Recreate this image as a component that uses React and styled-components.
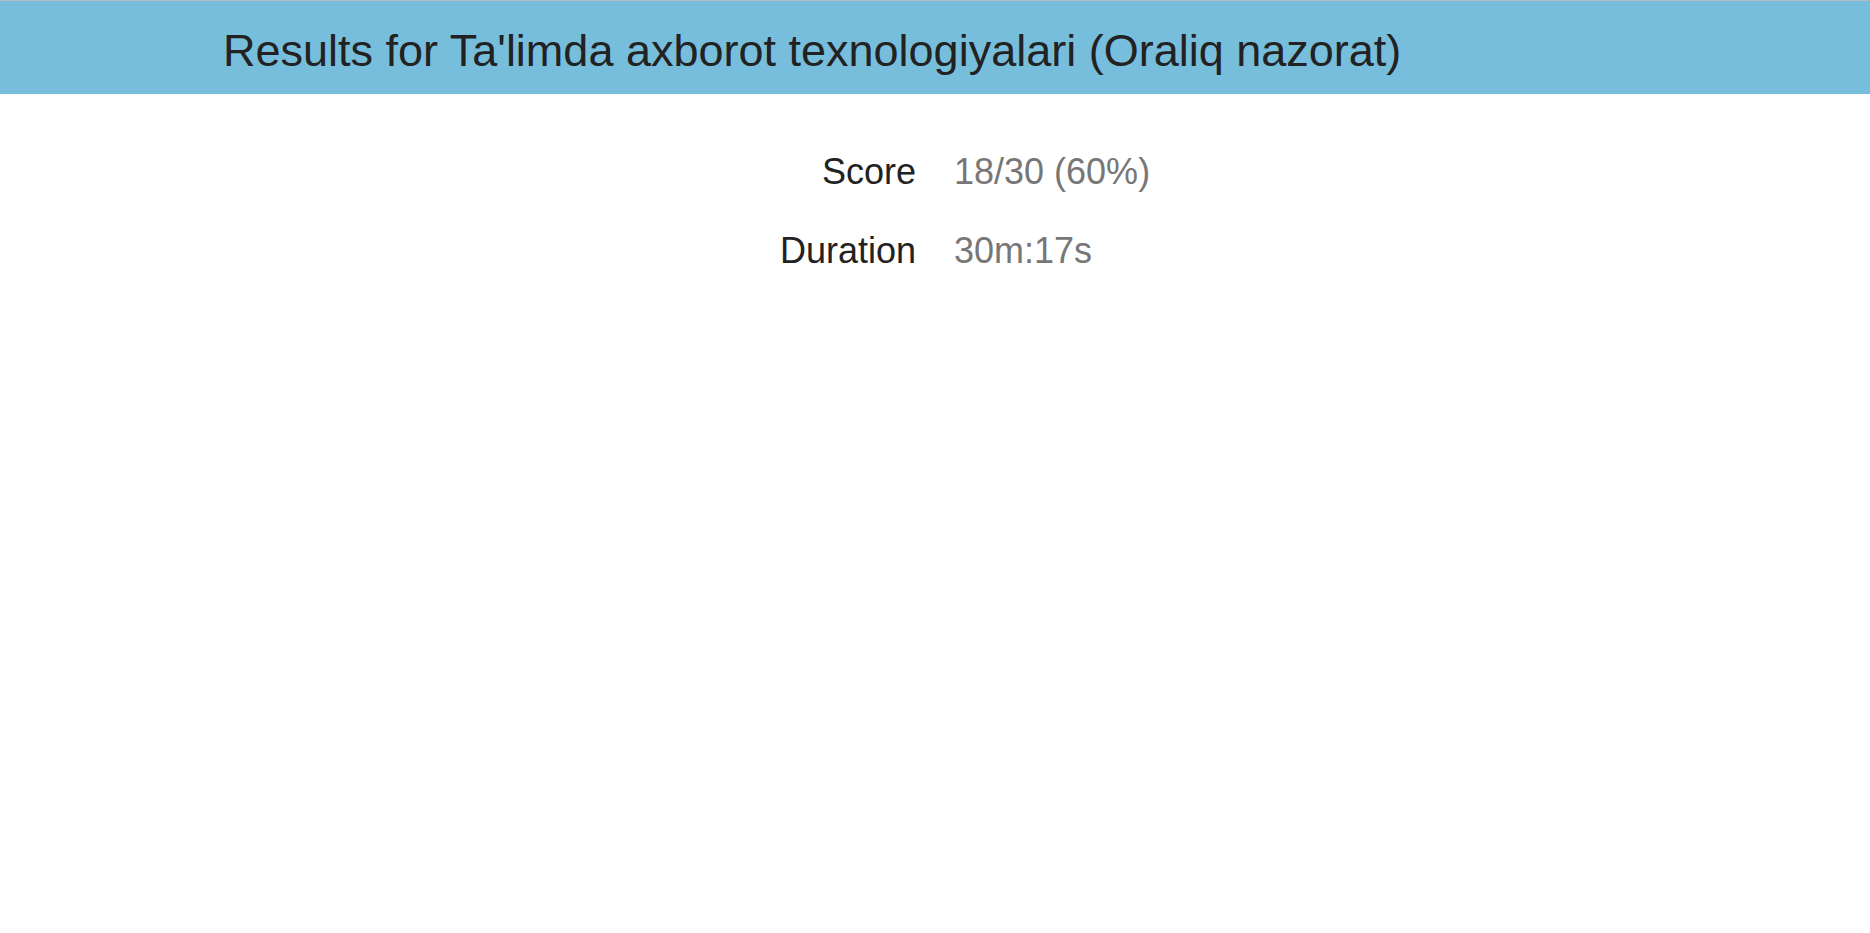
import React from 'react';
import styled, { createGlobalStyle } from 'styled-components';

const GlobalStyle = createGlobalStyle`
  html, body {
    margin: 0;
    padding: 0;
    background: #ffffff;
    font-family: "Liberation Sans", Arial, sans-serif;
  }
`;

const Header = styled.header`
  box-sizing: border-box;
  height: 94px;
  padding: 25px 0 0 223px;
  background-color: #77bedd;
  border-top: 1px solid #b3bcc4;
`;

const Title = styled.h1`
  margin: 0;
  font-size: 45px;
  font-weight: 400;
  line-height: 49.5px;
  color: #222222;
`;

const Details = styled.dl`
  display: grid;
  grid-template-columns: 1fr 1fr;
  column-gap: 38px;
  row-gap: 28px;
  margin: 52px 0 0;
  font-size: 36px;
  line-height: 51px;
`;

const Label = styled.dt`
  margin: 0;
  text-align: right;
  color: #222222;
`;

const Value = styled.dd`
  margin: 0;
  text-align: left;
  color: #777777;
`;

const rows = [
  { label: 'Score', value: '18/30 (60%)' },
  { label: 'Duration', value: '30m:17s' },
];

const App = () => (
  <>
    <GlobalStyle />
    <Header>
      <Title>Results for Ta'limda axborot texnologiyalari (Oraliq nazorat)</Title>
    </Header>
    <Details>
      {rows.map((row) => (
        <React.Fragment key={row.label}>
          <Label>{row.label}</Label>
          <Value>{row.value}</Value>
        </React.Fragment>
      ))}
    </Details>
  </>
);

export default App;
